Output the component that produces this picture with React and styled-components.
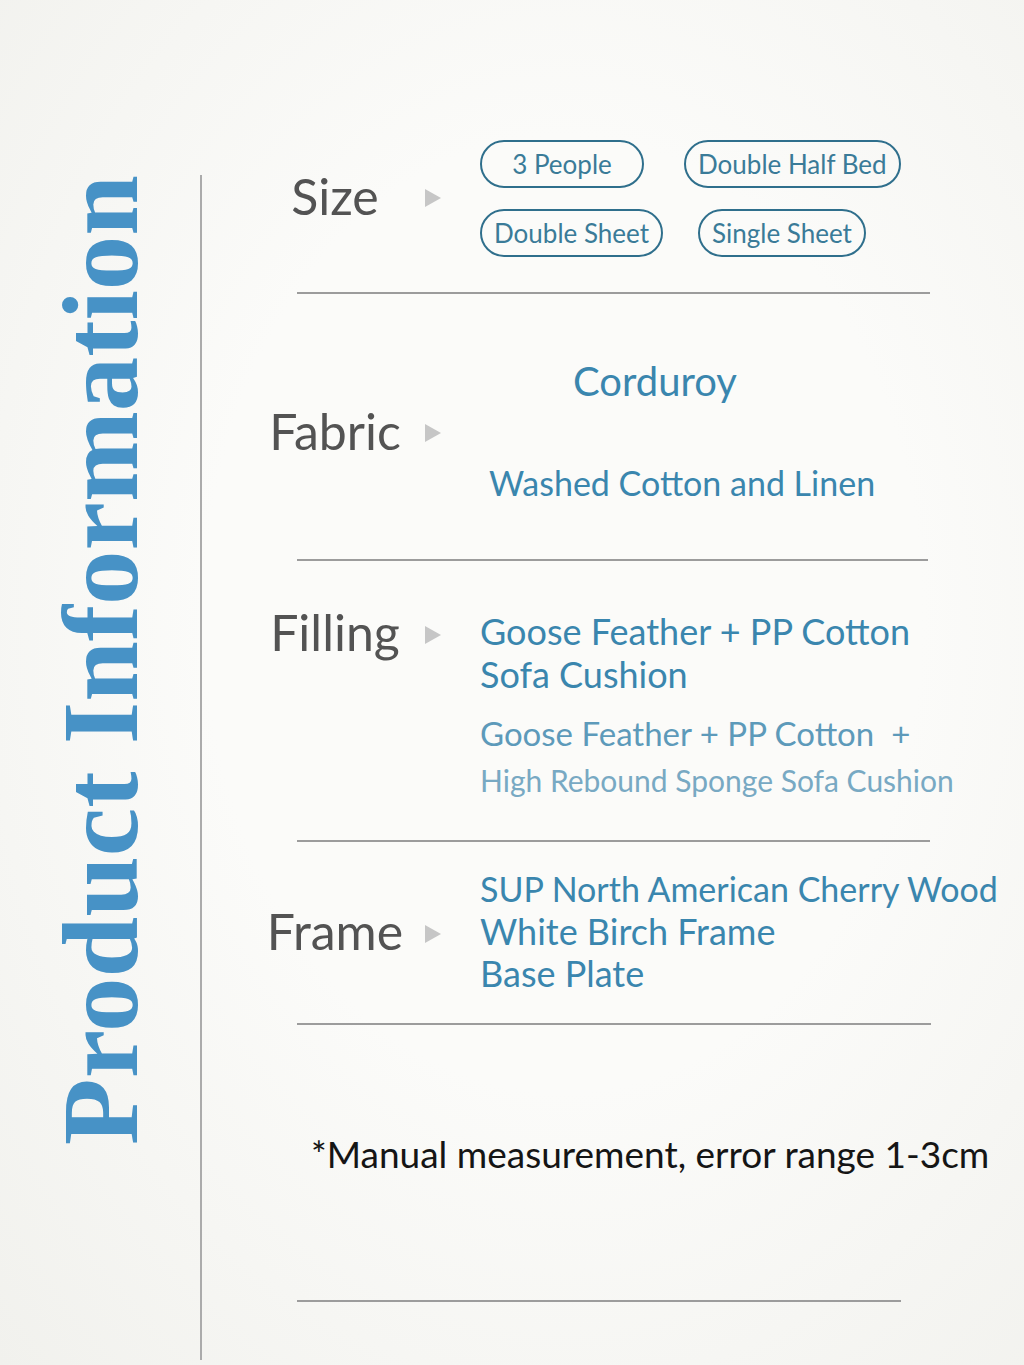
import React from "react";
import styled, { createGlobalStyle } from "styled-components";

const GlobalStyle = createGlobalStyle`
  html, body {
    margin: 0;
    padding: 0;
  }
  body {
    background: #f5f5f2;
    font-family: Lato, "Open Sans", sans-serif;
  }
`;

const Page = styled.div`
  width: 1024px;
  height: 1365px;
  display: flex;
  overflow: hidden;
  background: radial-gradient(ellipse at 55% 45%, #fbfbf9 45%, #f1f1ed 100%);
`;

const TitleColumn = styled.aside`
  flex: none;
  width: 200px;
  height: 1185px;
  margin-top: 175px;
  border-right: 2px solid #ababab;
  display: flex;
  align-items: flex-start;
`;

const Title = styled.h1`
  margin: 0 0 0 46px;
  writing-mode: vertical-rl;
  transform: rotate(180deg);
  font-family: "Liberation Serif", "Times New Roman", serif;
  font-weight: 700;
  font-size: 109px;
  line-height: 1;
  white-space: nowrap;
  color: #4792c6;
`;

const Content = styled.main`
  flex: 1;
  display: flex;
  flex-direction: column;
`;

const Section = styled.section`
  display: flex;
  align-items: ${({ align }) => align || "center"};
  padding-top: ${({ top }) => top}px;
  padding-bottom: ${({ bottom }) => bottom}px;
`;

const Head = styled.div`
  flex: none;
  display: flex;
  align-items: center;
  margin-left: 63px;
  margin-top: ${({ lift }) => (lift ? -lift * 2 : 0)}px;
`;

const Label = styled.div`
  width: 140px;
  text-align: center;
  font-size: 50px;
  line-height: 60px;
  color: #535353;
`;

const Arrow = styled.span`
  margin-left: 20px;
  margin-top: 5px;
  width: 0;
  height: 0;
  border-left: 16px solid #c6c6c6;
  border-top: 9px solid transparent;
  border-bottom: 9px solid transparent;
`;

const Values = styled.div`
  margin-left: 39px;
  margin-top: ${({ shift }) => shift || 0}px;
  display: flex;
  flex-direction: column;
`;

const PillRows = styled.div`
  display: flex;
  flex-direction: column;
  gap: 21px;
`;

const PillRow = styled.div`
  display: flex;
  gap: ${({ gap }) => gap}px;
`;

const Pill = styled.span`
  box-sizing: border-box;
  height: 48px;
  min-width: 164px;
  padding: 0 12px;
  display: flex;
  align-items: center;
  justify-content: center;
  border: 2px solid #2f6f8c;
  border-radius: 24px;
  font-size: 26px;
  color: #3a7b98;
  white-space: nowrap;
`;

const Line = styled.div`
  font-size: ${({ size }) => size}px;
  line-height: ${({ lh }) => lh}px;
  color: ${({ tone }) => tone || "#3a86ae"};
  margin-left: ${({ indent }) => indent || 0}px;
  margin-top: ${({ gap }) => gap || 0}px;
  white-space: nowrap;
`;

const Divider = styled.hr`
  margin: 0 0 0 95px;
  border: none;
  height: 2px;
  width: ${({ w }) => w}px;
  background: #9c9c9c;
`;

const Note = styled.p`
  margin: 107px 0 124px 109px;
  font-size: 37px;
  line-height: 44px;
  color: #151515;
  white-space: nowrap;
`;

const Row = ({ label, lift, children, ...rest }) => (
  <Section {...rest}>
    <Head lift={lift}>
      <Label>{label}</Label>
      <Arrow />
    </Head>
    {children}
  </Section>
);

const App = () => {
  return (
    <>
      <GlobalStyle />
      <Page>
        <TitleColumn>
          <Title>Product Information</Title>
        </TitleColumn>
        <Content>
          <Row label="Size" lift={3} top={140} bottom={35}>
            <Values>
              <PillRows>
                <PillRow gap={40}>
                  <Pill>3 People</Pill>
                  <Pill>Double Half Bed</Pill>
                </PillRow>
                <PillRow gap={35}>
                  <Pill>Double Sheet</Pill>
                  <Pill>Single Sheet</Pill>
                </PillRow>
              </PillRows>
            </Values>
          </Row>
          <Divider w={633} />

          <Row label="Fabric" top={63} bottom={55}>
            <Values>
              <Line size={40} lh={48} indent={93}>Corduroy</Line>
              <Line size={34} lh={42} indent={9} gap={57}>Washed Cotton and Linen</Line>
            </Values>
          </Row>
          <Divider w={631} />

          <Row label="Filling" top={41} bottom={41} align="flex-start">
            <Values shift={8}>
              <Line size={36} lh={43}>Goose Feather + PP Cotton</Line>
              <Line size={36} lh={43}>Sofa Cushion</Line>
              <Line size={33} lh={40} gap={17} tone="#5d9aba">Goose Feather + PP Cotton&nbsp; +</Line>
              <Line size={30} lh={38} gap={8} tone="#78a9c3">High Rebound Sponge Sofa Cushion</Line>
            </Values>
          </Row>
          <Divider w={633} />

          <Row label="Frame" top={26} bottom={29}>
            <Values>
              <Line size={34} lh={42}>SUP North American Cherry Wood</Line>
              <Line size={36} lh={42}>White Birch Frame</Line>
              <Line size={36} lh={42}>Base Plate</Line>
            </Values>
          </Row>
          <Divider w={634} />

          <Note>*Manual measurement, error range 1-3cm</Note>
          <Divider w={604} />
        </Content>
      </Page>
    </>
  );
};

export default App;
